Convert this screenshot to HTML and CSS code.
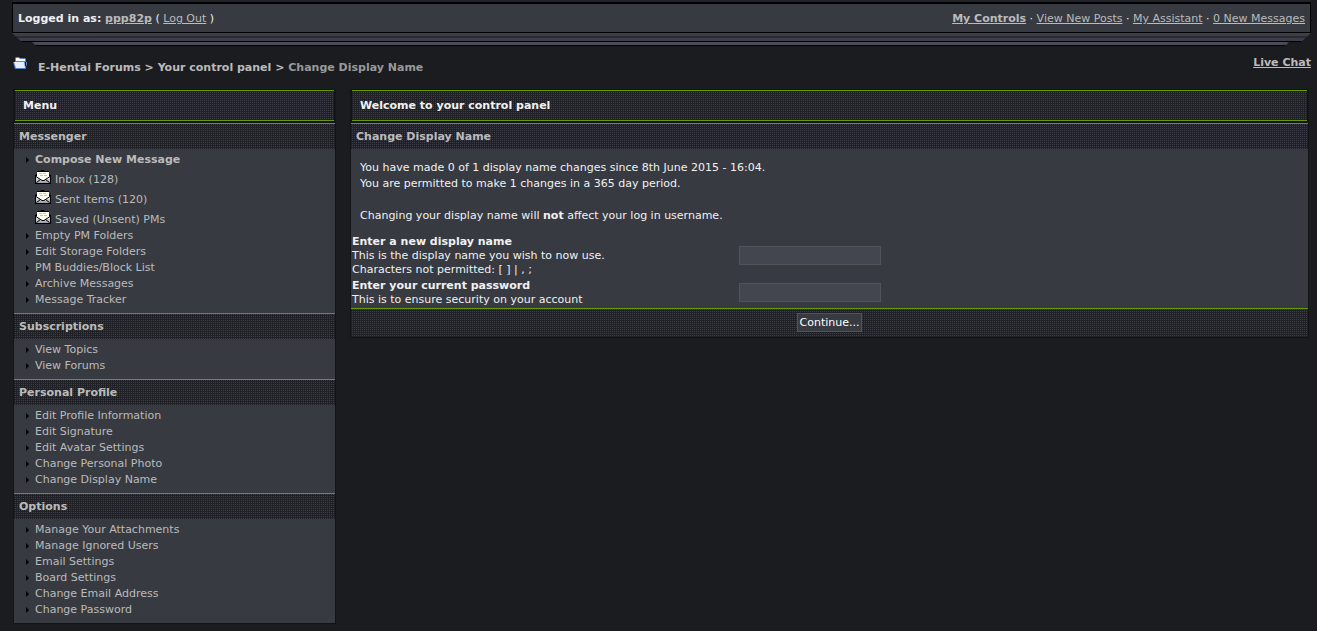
FILE: index.html
```
<!DOCTYPE html>
<html lang="en">
<head>
    <meta charset="UTF-8">
    <meta name="viewport" content="width=device-width, initial-scale=1.0">
    <title>E-Hentai Forums - Change Display Name</title>
    <link rel="stylesheet" href="styles.css">
</head>
<body>
    <svg class="sprites" width="0" height="0" aria-hidden="true">
        <defs>
            <linearGradient id="paper" x1="0" y1="0" x2="0" y2="1">
                <stop offset="0" stop-color="#ffffff"/>
                <stop offset="1" stop-color="#9a9aa8"/>
            </linearGradient>
            <!-- open envelope -->
            <symbol id="mail" viewBox="0 0 16 14">
                <path d="M5 1.5L6 .5H9L10 1.5" fill="none" stroke="#000"/>
                <path d="M2 1H14V4L16 5V14H0V5L2 4Z" fill="#000"/>
                <path d="M1 6L7 9.5H9L15 6V13H1Z" fill="url(#paper)"/>
                <path d="M2 2H14V7L9 10H7L2 7Z" fill="#fffff4"/>
                <path d="M4 3.5H11M5 5.5H12" stroke="#c4c4b8" stroke-dasharray="3 1"/>
                <path d="M1 6.5L7 10.5H9L15 6.5M1.5 12.5L5.5 9.5M14.5 12.5L10.5 9.5" fill="none" stroke="#000"/>
            </symbol>
        </defs>
    </svg>

    <!-- user bar -->
    <div class="top-strip"></div>
    <header class="userlinks">
        <div><b>Logged in as: <a href="#">ppp82p</a></b> ( <a href="#">Log Out</a> )</div>
        <div><b><a href="#">My Controls</a></b> &middot; <a href="#">View New Posts</a> &middot; <a href="#">My Assistant</a> &middot; <a href="#">0 New Messages</a></div>
    </header>
    <div class="ledge ledge-upper"></div>
    <div class="ledge ledge-lower"></div>

    <!-- breadcrumb -->
    <div class="navstrip">
        <svg class="folder" width="14" height="12" viewBox="0 0 14 12" aria-hidden="true">
            <path d="M2 1L3 0H6L7 1H12L13 2V5H14V8L13 9V12H2L0 5H2Z" fill="#5b82cf"/>
            <path d="M3 1H6L7 2H12V4H3Z" fill="#fff"/>
            <path d="M1 5H11L12 11H3Z" fill="#e6effd"/>
            <path d="M12.500 5V9" stroke="#101d3c"/>
        </svg>
        <nav class="crumbs"><a href="#">E-Hentai Forums</a> &gt; <a href="#">Your control panel</a> &gt; <span>Change Display Name</span></nav>
        <a class="chat" href="#">Live Chat</a>
    </div>

    <div class="columns">
        <!-- menu -->
        <aside class="box menu">
            <h2 class="maintitle">Menu</h2>
            <h3 class="subtitle">Messenger</h3>
            <ul>
                <li><a href="#"><b>Compose New Message</b></a></li>
                <li class="mail"><svg width="16" height="14"><use href="#mail"/></svg><a href="#">Inbox (128)</a></li>
                <li class="mail"><svg width="16" height="14"><use href="#mail"/></svg><a href="#">Sent Items (120)</a></li>
                <li class="mail"><svg width="16" height="14"><use href="#mail"/></svg><a href="#">Saved (Unsent) PMs</a></li>
                <li><a href="#">Empty PM Folders</a></li>
                <li><a href="#">Edit Storage Folders</a></li>
                <li><a href="#">PM Buddies/Block List</a></li>
                <li><a href="#">Archive Messages</a></li>
                <li><a href="#">Message Tracker</a></li>
            </ul>
            <h3 class="subtitle">Subscriptions</h3>
            <ul>
                <li><a href="#">View Topics</a></li>
                <li><a href="#">View Forums</a></li>
            </ul>
            <h3 class="subtitle">Personal Profile</h3>
            <ul>
                <li><a href="#">Edit Profile Information</a></li>
                <li><a href="#">Edit Signature</a></li>
                <li><a href="#">Edit Avatar Settings</a></li>
                <li><a href="#">Change Personal Photo</a></li>
                <li><a href="#">Change Display Name</a></li>
            </ul>
            <h3 class="subtitle">Options</h3>
            <ul>
                <li><a href="#">Manage Your Attachments</a></li>
                <li><a href="#">Manage Ignored Users</a></li>
                <li><a href="#">Email Settings</a></li>
                <li><a href="#">Board Settings</a></li>
                <li><a href="#">Change Email Address</a></li>
                <li><a href="#">Change Password</a></li>
            </ul>
        </aside>

        <!-- control panel -->
        <main class="box panel">
            <h2 class="maintitle">Welcome to your control panel</h2>
            <h3 class="subtitle">Change Display Name</h3>
            <div class="intro">
                <p>You have made 0 of 1 display name changes since 8th June 2015 - 16:04.<br>
                You are permitted to make 1 changes in a 365 day period.</p>
                <p>Changing your display name will <b>not</b> affect your log in username.</p>
            </div>
            <form>
                <div class="field">
                    <label for="display-name"><b>Enter a new display name</b><br>This is the display name you wish to now use.<br>Characters not permitted: [ ] | , ;</label>
                    <input type="text" id="display-name">
                </div>
                <div class="field">
                    <label for="password"><b>Enter your current password</b><br>This is to ensure security on your account</label>
                    <input type="password" id="password">
                </div>
                <div class="formbuttons">
                    <button type="button">Continue...</button>
                </div>
            </form>
        </main>
    </div>
</body>
</html>
```

FILE: styles.css
```
* {
    box-sizing: border-box;
}
body {
    margin: 0;
    background: #1b1c20;
    color: #f1f1f1;
    font-family: Verdana, "DejaVu Sans", sans-serif;
    font-size: 11px;
    line-height: 16px;
}
a {
    color: #bbb;
}
h2, h3, p, ul {
    margin: 0;
    padding: 0;
}
.sprites {
    position: absolute;
}
.top-strip {
    height: 3px;
    margin: 0 6px 0 12px;
    background: #222329;
    border-bottom: 1px solid #000;
}
.userlinks {
    display: flex;
    justify-content: space-between;
    margin: 0 6px 0 12px;
    padding: 7px 5px 5px;
    background: #373a41;
    border: 1px solid #000;
}
.ledge {
    background: repeating-linear-gradient(#3d3f48 0 3px, #2b2c33 3px 5px);
    border-bottom: 1px solid #000;
}
.ledge-upper {
    height: 9px;
    margin: 0 6px 0 12px;
    clip-path: polygon(0 0, 100% 0, calc(100% - 10px) 100%, 10px 100%);
}
.ledge-lower {
    height: 4px;
    margin: 0 28px 0 32px;
    background: #484a56;
    clip-path: polygon(0 0, 100% 0, calc(100% - 4px) 100%, 4px 100%);
}
.navstrip {
    display: flex;
    align-items: flex-start;
    padding: 9px 6px 0 13px;
    height: 43px;
    font-weight: bold;
}
.folder {
    margin: 2px 11px 0 0;
}
.crumbs {
    flex: 1;
    padding-top: 5px;
    color: #bbb;
}
.crumbs a {
    text-decoration: none;
}
.crumbs span {
    color: #999;
}

/* panels */
.columns {
    display: grid;
    grid-template-columns: 32fr 95fr;
    gap: 14px;
    align-items: start;
    padding: 0 8px 0 13px;
}
.box {
    background: #373a41;
    border: 1px solid #131417;
}
.maintitle, .subtitle, .formbuttons {
    background: conic-gradient(#3c3d47 25%, #202126 0) 0 0 / 2px 2px;
}
.maintitle {
    padding: 8px 8px 7px;
    font-size: 11px;
    border: solid #131417;
    border-width: 0 1px 2px;
    box-shadow: inset 0 1px #690, inset 0 -1px #690;
}
.subtitle {
    padding: 5px 5px 4px;
    color: #bbb;
    font-size: 11px;
    border-top: 1px solid #690;
}
.menu ul {
    padding: 3px 0 5px 12px;
    list-style: none;
}
.menu li {
    display: flex;
    align-items: center;
    gap: 6px;
}
.menu li::before {
    content: "";
    border: solid transparent;
    border-width: 3px 0 3px 3px;
    border-left-color: #000;
}
.menu li.mail {
    gap: 4px;
    height: 20px;
    padding: 4px 0 0 9px;
}
.menu .mail::before {
    display: none;
}
.mail svg {
    margin-bottom: 6px;
}
.menu a {
    text-decoration: none;
}
.intro {
    padding: 11px 9px 10px;
}
.intro p + p {
    margin-top: 16px;
}
.field {
    display: grid;
    grid-template-columns: 40% 1fr;
    column-gap: 5px;
    align-items: center;
    padding: 1px;
    line-height: 14px;
}
.field input {
    width: 142px;
    height: 19px;
    margin: 0 0 2px;
    background: #44464f;
    border: 1px solid #50535b;
    color: #f1f1f1;
    font: inherit;
}
.formbuttons {
    padding: 4px 4px 5px;
    border-top: 1px solid #690;
    text-align: center;
}
button {
    height: 19px;
    padding: 0 2px;
    background: #373a41;
    border: 1px solid #50535b;
    color: #fff;
    font: inherit;
    line-height: 16px;
    vertical-align: top;
}
```
